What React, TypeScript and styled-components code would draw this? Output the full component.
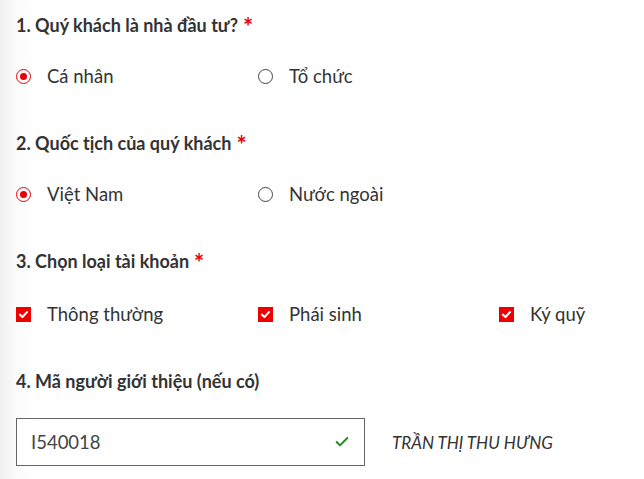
import styled, { createGlobalStyle } from 'styled-components'
import { Check } from 'lucide-react'

const GlobalStyle = createGlobalStyle`
  html, body {
    margin: 0;
    padding: 0;
    background: linear-gradient(to right, #efefef 0px, #fafafa 14px, #ffffff 34px);
    overflow: hidden;
  }
  body {
    font-family: Lato, "Liberation Sans", sans-serif;
    color: #333;
  }
`

const Form = styled.div`
  display: flex;
  flex-direction: column;
  gap: 43px;
  padding: 13px 0 0 16px;
`

const Section = styled.section`
  display: flex;
  flex-direction: column;
  gap: 27px;
`

const Heading = styled.h3`
  margin: 0;
  height: 24px;
  font-size: 18px;
  line-height: 24px;
  font-weight: 700;
  color: #333;

  span {
    color: #e8000b;
    margin-left: 5px;
    font-size: 24px;
    line-height: 0;
    vertical-align: -4px;
  }
`

const Options = styled.div<{ $shift?: number }>`
  display: grid;
  grid-template-columns: 242px 241px auto;
  height: 24px;
  align-items: center;
  margin-top: ${(p) => p.$shift ?? 0}px;
`

const Option = styled.label`
  display: flex;
  align-items: center;
  gap: 16px;
  font-size: 18.5px;
  line-height: 24px;
  color: #333;
`

const RadioDot = styled.span<{ $on?: boolean }>`
  box-sizing: border-box;
  width: 15px;
  height: 15px;
  border-radius: 50%;
  border: 1.5px solid ${(p) => (p.$on ? '#e8000b' : '#444')};
  display: flex;
  align-items: center;
  justify-content: center;

  &::after {
    content: '';
    width: 7px;
    height: 7px;
    border-radius: 50%;
    background: ${(p) => (p.$on ? '#e8000b' : 'transparent')};
  }
`

const Box = styled.span`
  width: 15px;
  height: 15px;
  background: #ee0000;
  display: flex;
  align-items: center;
  justify-content: center;
`

const InputRow = styled.div`
  display: flex;
  align-items: center;
  gap: 27px;
  margin-top: -2px;
`

const InputBox = styled.div`
  box-sizing: border-box;
  width: 349px;
  height: 48px;
  border: 1px solid #666;
  display: flex;
  align-items: center;
  justify-content: space-between;
  padding: 0 14px 0 14px;
  background: #fff;
  font-size: 18.5px;
  color: #444;
`

const RefName = styled.div`
  font-size: 17px;
  font-style: italic;
  color: #333;
`

function Radio({ on, label }: { on?: boolean; label: string }) {
  return (
    <Option>
      <RadioDot $on={on} />
      {label}
    </Option>
  )
}

function CheckItem({ label }: { label: string }) {
  return (
    <Option>
      <Box>
        <svg width="11" height="11" viewBox="0 0 12 12">
          <path d="M2.2 6.3 L4.9 8.8 L9.8 3.4" fill="none" stroke="#fff" strokeWidth="2.4" strokeLinecap="round" strokeLinejoin="round" />
        </svg>
      </Box>
      {label}
    </Option>
  )
}

export default function App() {
  return (
    <>
      <GlobalStyle />
      <Form>
        <Section>
          <Heading>
            1. Quý khách là nhà đầu tư?<span>*</span>
          </Heading>
          <Options>
            <Radio on label="Cá nhân" />
            <Radio label="Tổ chức" />
          </Options>
        </Section>
        <Section>
          <Heading>
            2. Quốc tịch của quý khách<span>*</span>
          </Heading>
          <Options>
            <Radio on label="Việt Nam" />
            <Radio label="Nước ngoài" />
          </Options>
        </Section>
        <Section>
          <Heading>
            3. Chọn loại tài khoản<span>*</span>
          </Heading>
          <Options $shift={2}>
            <CheckItem label="Thông thường" />
            <CheckItem label="Phái sinh" />
            <CheckItem label="Ký quỹ" />
          </Options>
        </Section>
        <Section>
          <Heading>4. Mã người giới thiệu (nếu có)</Heading>
          <InputRow>
            <InputBox>
              I540018
              <Check size={16} color="#1f8f1f" strokeWidth={3} />
            </InputBox>
            <RefName>TRẦN THỊ THU HƯNG</RefName>
          </InputRow>
        </Section>
      </Form>
    </>
  )
}
